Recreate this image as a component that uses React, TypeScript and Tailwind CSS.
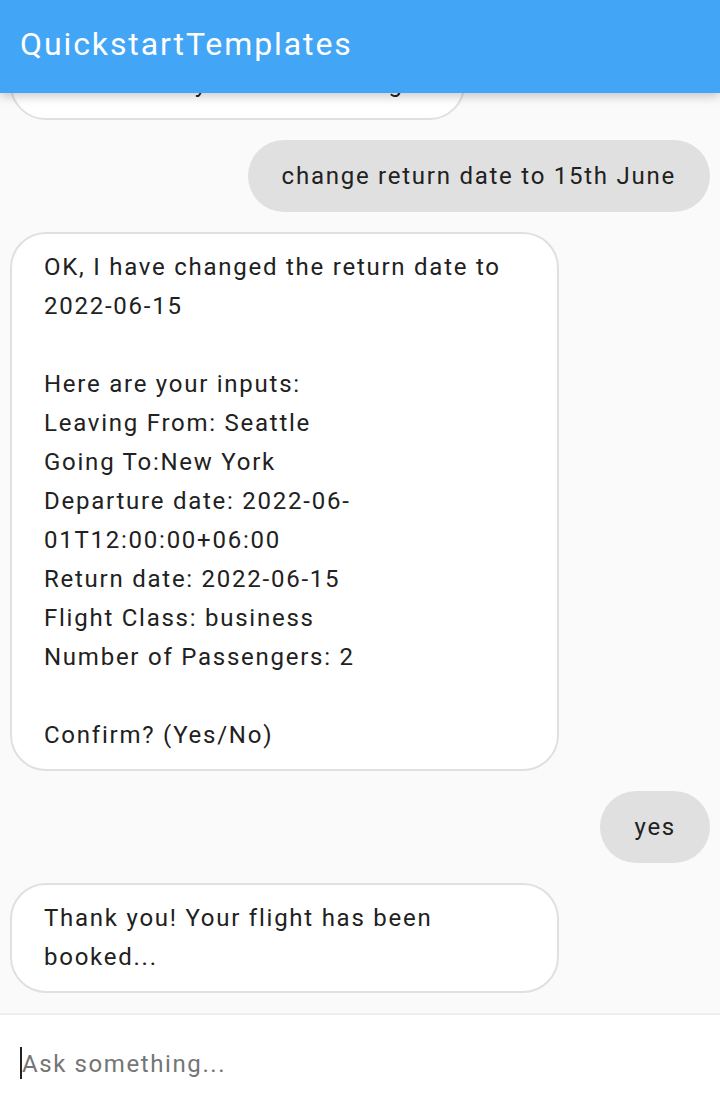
const messages = [
  { from: "bot", text: "What would you like to change?", fixed: false },
  { from: "user", text: "change return date to 15th June" },
  {
    from: "bot",
    text: "OK, I have changed the return date to\n2022-06-15\n\nHere are your inputs:\nLeaving From: Seattle\nGoing To:New York\nDeparture date: 2022-06-\n01T12:00:00+06:00\nReturn date: 2022-06-15\nFlight Class: business\nNumber of Passengers: 2\n\nConfirm? (Yes/No)",
    fixed: true,
  },
  { from: "user", text: "yes" },
  { from: "bot", text: "Thank you! Your flight has been\nbooked...", fixed: true },
];

export default function App() {
  return (
    <div className="flex h-[1106px] w-full flex-col bg-[#fafafa] font-['Roboto',sans-serif] text-[#212121]">
      {/* app bar */}
      <header className="relative z-10 flex h-[93px] shrink-0 items-center bg-[#42a5f5] px-5 pb-[6px] shadow-[0_3px_10px_rgba(0,0,0,0.22)]">
        <h1 className="text-[32px] font-normal leading-none tracking-[1.9px] text-white">QuickstartTemplates</h1>
      </header>

      {/* messages */}
      <main className="flex flex-1 flex-col justify-end gap-5 overflow-hidden px-[10px] pb-5">
        {messages.map((m, i) =>
          m.from === "user" ? (
            <div key={i} className="flex shrink-0 justify-end">
              <div className="flex h-[72px] items-center rounded-full bg-[#e0e0e0] px-[34px] text-[24px] leading-[39px] tracking-[1.75px]">
                {m.text}
              </div>
            </div>
          ) : (
            <div key={i} className="flex shrink-0 justify-start">
              <div
                className={`${m.fixed ? "w-[549px]" : "w-fit"} whitespace-pre-line rounded-[36px] border-2 border-[#e0e0e0] bg-white px-[32px] py-[14px] text-[24px] leading-[39px] tracking-[1.75px]`}
              >
                {m.text}
              </div>
            </div>
          )
        )}
      </main>

      {/* input */}
      <div className="flex h-[93px] shrink-0 items-center border-t-2 border-[#eeeeee] bg-white pl-5 pt-[6px]">
        <span className="mb-[2px] h-[32px] w-[2px] bg-[#212121]" />
        <span className="text-[24px] tracking-[1.6px] text-[#757575]">Ask something...</span>
      </div>
    </div>
  );
}
